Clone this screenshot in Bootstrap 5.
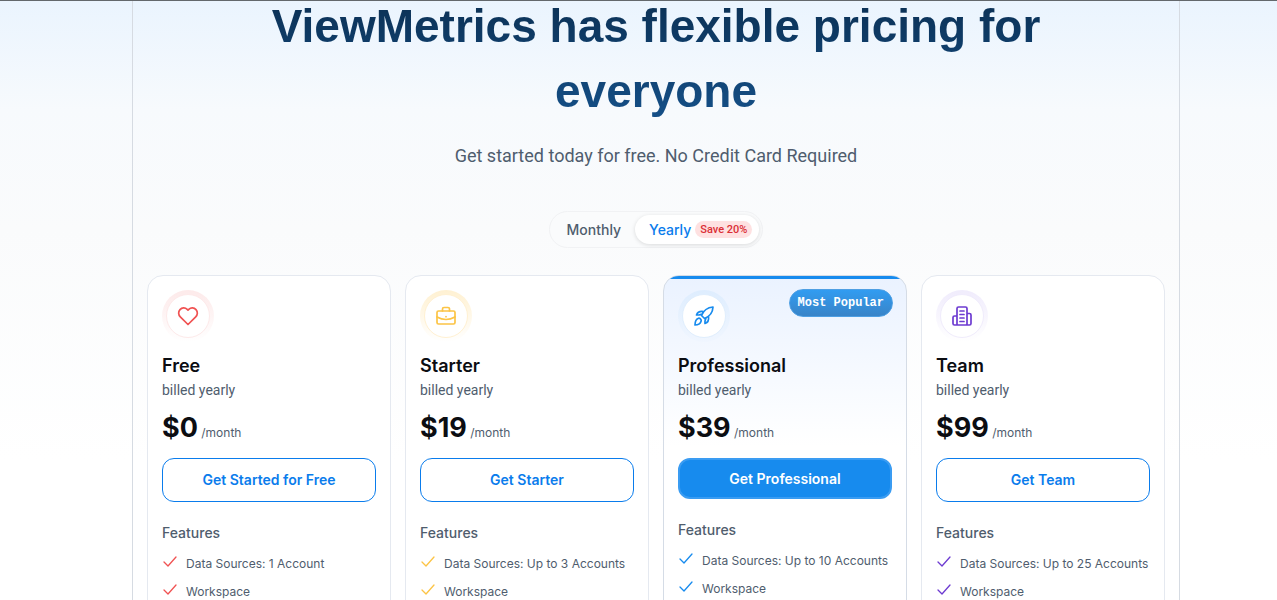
<!DOCTYPE html>
<html lang="en">
<head>
<meta charset="utf-8">
<meta name="viewport" content="width=device-width, initial-scale=1">
<title>ViewMetrics pricing</title>
<link href="https://cdn.jsdelivr.net/npm/bootstrap@5.3.0/dist/css/bootstrap.min.css" rel="stylesheet">
<style>
  body { font-family: Inter, "Liberation Sans", sans-serif; color: #4f5d6e; background: #fff linear-gradient(#eaf4fe 0, #f7fafd 110px, #fafbfc 230px, #fff 460px) no-repeat; border-top: 1px solid #63686c; }
  .frame { margin: 0 16px; padding: 0 14px; border: solid #d6dbe2; border-width: 0 1px; }
  .hero-title { font-family: "Liberation Sans", sans-serif; font-size: 46px; line-height: 65px; font-weight: 700; margin: -7px auto 0; max-width: 840px; background: linear-gradient(#0b2f52, #15518a); -webkit-background-clip: text; background-clip: text; color: transparent; }
  .hero-sub, .billed, .save-tag { font-family: Roboto, "Liberation Sans", sans-serif; }
  .hero-sub { font-size: 18px; line-height: 28px; margin: 18px 0 41px; }
  .switcher { padding: 3px; border: 1px solid #f1f2f4; background: #fafbfc; }
  .switcher .btn { --bs-btn-padding-x: 14px; --bs-btn-padding-y: 4px; --bs-btn-border-width: 0; --bs-btn-color: #4f5d6e; font-size: 14px; line-height: 21px; font-weight: 500; }
  .switcher .btn.active { background: #fff; color: #0a7cec; padding-right: 7px; box-shadow: 0 1px 4px #00000022; }
  .save-tag { background: #fee1e1; color: #db2f36; font-size: 11px; line-height: 17px; padding: 0 5px; }
  .plans { --bs-gutter-x: 14px; --bs-gutter-y: 14px; margin-top: 13px; }
  .plan { --tint: #f05252; --halo: #fdeaea; border: 1px solid #e5e9f0; border-radius: 16px; background: #fff; padding: 14px 14px 32px; height: 100%; position: relative; overflow: hidden; }
  .plan-starter { --tint: #fcc445; --halo: #fff1d2; }
  .plan-pro { --tint: #178bee; --halo: #e0eefd; border-color: #d5dce6; background: linear-gradient(#eaf2ff, #fff 170px); }
  .plan-pro::before { content: ""; position: absolute; top: 0; left: 0; right: 0; height: 3px; background: #178bee; }
  .plan-team { --tint: #6d3bd1; --halo: #f0ecfc; }
  .halo { width: 52px; height: 52px; background: linear-gradient(var(--halo), #fff); }
  .plan-pro .halo { background: linear-gradient(#deedfe, #f0f6ff); }
  .disc { width: 44px; height: 44px; background: #fff; border: 1px solid var(--halo); color: var(--tint); }
  .plan svg { fill: none; stroke: currentColor; stroke-linecap: round; stroke-linejoin: round; }
  .popular { top: 13px; right: 13px; height: 28px; padding: 0 8px; display: flex; align-items: center; color: #fff; background: linear-gradient(#319cf1, #3984c8); border: 1px solid #4e9fe3; font: bold 12px "Liberation Mono", monospace; }
  .plan-name { font-size: 18px; line-height: 24px; font-weight: 600; color: #0b0d12; margin: 12px 0 0; }
  .billed { font-size: 14px; line-height: 20px; margin: 2px 0 0; }
  .price { line-height: 36px; margin: 10px 0 0; font-size: 12px; }
  .price strong { font-size: 27px; font-weight: 700; color: #0b0d12; }
  .buy { --bs-btn-color: #0a7cec; --bs-btn-border-color: #0a7cec; --bs-btn-border-radius: 12px; --bs-btn-hover-color: #fff; --bs-btn-hover-bg: #178bee; font-size: 14px; line-height: 26px; font-weight: 600; padding: 8px; margin-top: 7px; }
  .plan-pro .buy { --bs-btn-color: #fff; --bs-btn-bg: #178bee; --bs-btn-border-color: #3a9cf2; border-width: 2px; line-height: 21px; }
  .feature-title { font-size: 14px; line-height: 20px; font-weight: 500; margin: 21px 0 7px; }
  .features { font-size: 12px; line-height: 20px; }
  .features li { padding: 4px 0; gap: 8px; }
  .features svg { color: var(--tint); flex: none; }
  @media (min-width: 1200px) {
    body { height: 100vh; overflow: hidden; }
    .frame { margin: 0 97px 0 132px; }
  }
</style>
</head>
<body>
<main class="frame">
  <header class="text-center">
    <h1 class="hero-title">ViewMetrics has flexible pricing for everyone</h1>
    <p class="hero-sub">Get started today for free. No Credit Card Required</p>
    <div class="switcher rounded-pill d-inline-flex align-items-center" role="group" aria-label="Billing period">
      <button type="button" class="btn rounded-pill">Monthly</button>
      <button type="button" class="btn rounded-pill active d-flex align-items-center gap-1" aria-pressed="true">Yearly <span class="save-tag rounded-pill">Save 20%</span></button>
    </div>
  </header>
  <section class="plans row row-cols-1 row-cols-sm-2 row-cols-lg-4" aria-label="Plans">
    <div class="col"><article class="plan">
      <div class="halo rounded-circle d-flex align-items-center justify-content-center"><div class="disc rounded-circle d-flex align-items-center justify-content-center">
        <svg width="24" height="24" viewBox="0 0 24 24" stroke-width="1.7"><path d="M12 20.5 4.3 12.8A5 5 0 0 1 11.2 5.3L12 6.1l.8-.8a5 5 0 0 1 6.900 7.5Z"/></svg>
      </div></div>
      <h2 class="plan-name">Free</h2><p class="billed">billed yearly</p>
      <p class="price"><strong>$0</strong> /month</p>
      <button type="button" class="btn buy w-100">Get Started for Free</button>
      <h3 class="feature-title">Features</h3>
      <ul class="features list-unstyled mb-0">
        <li class="d-flex"><svg width="16" height="16" viewBox="0 0 16 16" stroke-width="1.3"><path d="m2 8 4 4 8-9"/></svg>Data Sources: 1 Account</li>
        <li class="d-flex"><svg width="16" height="16" viewBox="0 0 16 16" stroke-width="1.3"><path d="m2 8 4 4 8-9"/></svg>Workspace</li>
      </ul>
    </article></div>
    <div class="col"><article class="plan plan-starter">
      <div class="halo rounded-circle d-flex align-items-center justify-content-center"><div class="disc rounded-circle d-flex align-items-center justify-content-center">
        <svg width="24" height="24" viewBox="0 0 24 24" stroke-width="1.7"><rect x="3" y="7" width="18" height="13" rx="1.5"/><path d="M8.500 7V5A1.500 1.500 0 0 1 10 3.500h4A1.500 1.500 0 0 1 15.500 5v2M3 13q9 5 18 0M12 12.500v.2"/></svg>
      </div></div>
      <h2 class="plan-name">Starter</h2><p class="billed">billed yearly</p>
      <p class="price"><strong>$19</strong> /month</p>
      <button type="button" class="btn buy w-100">Get Starter</button>
      <h3 class="feature-title">Features</h3>
      <ul class="features list-unstyled mb-0">
        <li class="d-flex"><svg width="16" height="16" viewBox="0 0 16 16" stroke-width="1.3"><path d="m2 8 4 4 8-9"/></svg>Data Sources: Up to 3 Accounts</li>
        <li class="d-flex"><svg width="16" height="16" viewBox="0 0 16 16" stroke-width="1.3"><path d="m2 8 4 4 8-9"/></svg>Workspace</li>
      </ul>
    </article></div>
    <div class="col"><article class="plan plan-pro">
      <span class="popular position-absolute rounded-pill">Most Popular</span>
      <div class="halo rounded-circle d-flex align-items-center justify-content-center"><div class="disc rounded-circle d-flex align-items-center justify-content-center">
        <svg width="24" height="24" viewBox="0 0 24 24" stroke-width="1.7"><path d="M9.500 11.500C11.500 6.500 15 3.500 21 3c-.3 6-3.500 9.500-8.500 11.500ZM10 10 7 11H4.500C5.500 8 8 7 11.500 7.500M14 14l-1 3v2.500c3-1 4-3.500 3.500-7M6 14.500c1.500-1 4 1 3 3C8 20.500 5.500 21 3 21c0-3 1-5.500 3-6.500ZM9.500 11.500l3 3"/></svg>
      </div></div>
      <h2 class="plan-name">Professional</h2><p class="billed">billed yearly</p>
      <p class="price"><strong>$39</strong> /month</p>
      <button type="button" class="btn buy w-100">Get Professional</button>
      <h3 class="feature-title">Features</h3>
      <ul class="features list-unstyled mb-0">
        <li class="d-flex"><svg width="16" height="16" viewBox="0 0 16 16" stroke-width="1.3"><path d="m2 8 4 4 8-9"/></svg>Data Sources: Up to 10 Accounts</li>
        <li class="d-flex"><svg width="16" height="16" viewBox="0 0 16 16" stroke-width="1.3"><path d="m2 8 4 4 8-9"/></svg>Workspace</li>
      </ul>
    </article></div>
    <div class="col"><article class="plan plan-team">
      <div class="halo rounded-circle d-flex align-items-center justify-content-center"><div class="disc rounded-circle d-flex align-items-center justify-content-center">
        <svg width="24" height="24" viewBox="0 0 24 24" stroke-width="1.7"><path d="M7 21V4.500A1.500 1.500 0 0 1 8.500 3h7A1.500 1.500 0 0 1 17 4.500V21M7 12H4.500A1.500 1.500 0 0 0 3 13.500v6A1.500 1.500 0 0 0 4.500 21h15a1.500 1.500 0 0 0 1.500-1.500V11a1.500 1.500 0 0 0-1.500-1.500H17M10 7h4M10 10.500h4M10 14h4M10 17.500h4"/></svg>
      </div></div>
      <h2 class="plan-name">Team</h2><p class="billed">billed yearly</p>
      <p class="price"><strong>$99</strong> /month</p>
      <button type="button" class="btn buy w-100">Get Team</button>
      <h3 class="feature-title">Features</h3>
      <ul class="features list-unstyled mb-0">
        <li class="d-flex"><svg width="16" height="16" viewBox="0 0 16 16" stroke-width="1.3"><path d="m2 8 4 4 8-9"/></svg>Data Sources: Up to 25 Accounts</li>
        <li class="d-flex"><svg width="16" height="16" viewBox="0 0 16 16" stroke-width="1.3"><path d="m2 8 4 4 8-9"/></svg>Workspace</li>
      </ul>
    </article></div>
  </section>
</main>
<script src="https://cdn.jsdelivr.net/npm/bootstrap@5.3.0/dist/js/bootstrap.bundle.min.js"></script>
</body>
</html>
